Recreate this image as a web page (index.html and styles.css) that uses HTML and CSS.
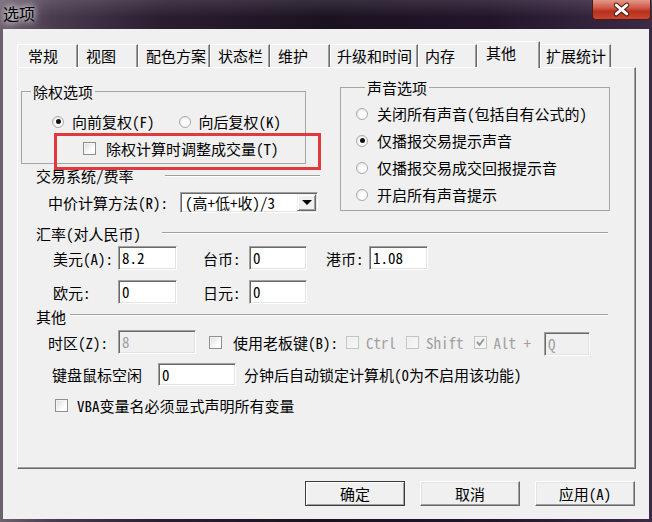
FILE: index.html
```html
<!DOCTYPE html>
<html lang="zh-CN">
<head>
    <meta charset="UTF-8">
    <title>选项</title>
    <link rel="stylesheet" href="styles.css">
</head>
<body>
    <div class="titlebar">
        <span class="title">选项</span>
        <div class="close-btn">
            <svg width="59" height="19" viewBox="0 0 59 19">
                <path d="M24 5 L35 14 M35 5 L24 14" stroke="#4a120c" stroke-width="5" stroke-linecap="round"/>
                <path d="M24 5 L35 14 M35 5 L24 14" stroke="#fff" stroke-width="3" stroke-linecap="round"/>
            </svg>
        </div>
    </div>

    <div class="client">
        <div class="tabs">
            <div class="tab">常规</div>
            <div class="tab">视图</div>
            <div class="tab">配色方案</div>
            <div class="tab">状态栏</div>
            <div class="tab">维护</div>
            <div class="tab">升级和时间</div>
            <div class="tab">内存</div>
            <div class="tab active">其他</div>
            <div class="tab">扩展统计</div>
        </div>

        <div class="panel">
            <div class="top-row">
                <div class="left-col">
                    <fieldset class="group group-xr">
                        <legend>除权选项</legend>
                        <div class="radio-row">
                            <span class="opt"><span class="radio checked"></span>向前复权(F)</span>
                            <span class="opt"><span class="radio"></span>向后复权(K)</span>
                        </div>
                        <div class="check-row marked">
                            <span class="check"></span>除权计算时调整成交量(T)
                        </div>
                    </fieldset>

                    <div class="section">
                        <span>交易系统/费率</span>
                        <i class="rule rule-short"></i>
                    </div>
                    <div class="row row-combo">
                        <span class="lbl lbl-combo">中价计算方法(R):</span>
                        <div class="combo">
                            <span>(高+低+收)/3</span>
                            <span class="drop"><i></i></span>
                        </div>
                    </div>
                </div>

                <fieldset class="group group-sound">
                    <legend>声音选项</legend>
                    <div class="opt"><span class="radio"></span>关闭所有声音(包括自有公式的)</div>
                    <div class="opt"><span class="radio checked"></span>仅播报交易提示声音</div>
                    <div class="opt"><span class="radio"></span>仅播报交易成交回报提示音</div>
                    <div class="opt"><span class="radio"></span>开启所有声音提示</div>
                </fieldset>
            </div>

            <div class="section section-rate">
                <span>汇率(对人民币)</span>
                <i class="rule rule-rate"></i>
            </div>
            <div class="row rate-row">
                <span class="lbl lbl-rate">美元(A):</span>
                <span class="field f-rate">8.2</span>
                <span class="lbl lbl-tw">台币:</span>
                <span class="field f-rate2">0</span>
                <span class="lbl lbl-hk">港币:</span>
                <span class="field f-rate">1.08</span>
            </div>
            <div class="row rate-row rate-row2">
                <span class="lbl lbl-rate">欧元:</span>
                <span class="field f-rate">0</span>
                <span class="lbl lbl-tw">日元:</span>
                <span class="field f-rate2">0</span>
            </div>

            <div class="section section-other">
                <span>其他</span>
                <i class="rule rule-other"></i>
            </div>
            <div class="row boss-row">
                <span class="lbl lbl-zone">时区(Z):</span>
                <span class="field f-zone disabled">8</span>
                <span class="check boss-check"></span>
                <span class="boss-text">使用老板键(B):</span>
                <span class="check disabled"></span>
                <span class="dim">Ctrl</span>
                <span class="check disabled"></span>
                <span class="dim">Shift</span>
                <span class="check disabled ticked">
                    <svg width="11" height="11" viewBox="0 0 11 11"><path d="M2 5 L4.5 8 L9 2" fill="none" stroke="#9a9a9a" stroke-width="2"/></svg>
                </span>
                <span class="dim">Alt +</span>
                <span class="field f-key disabled">Q</span>
            </div>
            <div class="row idle-row">
                <span class="lbl lbl-idle">键盘鼠标空闲</span>
                <span class="field f-idle">0</span>
                <span class="idle-text">分钟后自动锁定计算机(0为不启用该功能)</span>
            </div>
            <div class="row vba-row">
                <span class="check"></span>
                <span class="vba-text">VBA变量名必须显式声明所有变量</span>
            </div>
        </div>

        <div class="buttons">
            <div class="btn default">确定</div>
            <div class="btn">取消</div>
            <div class="btn">应用(A)</div>
        </div>
    </div>
</body>
</html>
```

FILE: styles.css
```css
* {
    box-sizing: border-box;
}

body {
    margin: 0;
    width: 652px;
    height: 522px;
    overflow: hidden;
    display: flex;
    flex-direction: column;
    font-family: "Noto Sans Mono CJK SC", "Noto Sans CJK SC", sans-serif;
    font-size: 15px;
    line-height: 17px;
    color: #000;
    background: linear-gradient(90deg, #6e6170 0%, #4a3b4f 8%, #2a1d30 25%, #1b1221 50%, #22152a 75%, #3d2a46 100%);
}

/* title bar */
.titlebar {
    height: 29px;
    display: flex;
    justify-content: space-between;
    align-items: flex-start;
    background: linear-gradient(180deg, rgba(255, 255, 255, 0.12), rgba(255, 255, 255, 0) 60%);
}

.title {
    padding: 5px 0 0 3px;
    font-size: 16px;
    text-shadow: 0 0 6px #fff, 0 0 10px rgba(255, 255, 255, 0.8);
}

.close-btn {
    width: 59px;
    height: 20px;
    margin-right: 1px;
    border: 1px solid #4a1a16;
    border-top: none;
    border-radius: 0 0 4px 4px;
    background: linear-gradient(180deg, #e3998c 0%, #d25a48 40%, #b8301f 60%, #c8462f 100%);
    display: flex;
    align-items: center;
    justify-content: center;
}

.close-btn svg {
    display: block;
}

/* client area */
.client {
    flex: 1;
    margin: 0 3px 3px;
    background: #f0f0f0;
    padding: 15px 13px 0 14px;
}

.tabs {
    display: flex;
    align-items: flex-end;
    height: 23px;
}

.tab {
    height: 23px;
    padding: 2px 0 0 7px;
    border-top: 1px solid #fff;
    border-left: 1px solid #fff;
    border-right: 1px solid #696969;
    box-shadow: inset -1px 0 #a0a0a0;
    white-space: nowrap;
}

.tab:nth-child(1) { width: 61px; padding-left: 10px; }
.tab:nth-child(2) { width: 60px; }
.tab:nth-child(3) { width: 72px; }
.tab:nth-child(4) { width: 60px; }
.tab:nth-child(5) { width: 60px; }
.tab:nth-child(6) { width: 88px; padding-left: 6px; }
.tab:nth-child(7) { width: 59px; padding-left: 6px; }
.tab:nth-child(8) { width: 63px; padding-left: 8px; }
.tab:nth-child(9) { width: 71px; padding-left: 5px; }

.tab.active {
    height: 27px;
    margin-bottom: -1px;
    position: relative;
    z-index: 1;
    background: #f0f0f0;
}

.panel {
    width: 619px;
    height: 402px;
    padding-left: 3px;
    border: 1px solid #fff;
    border-right-color: #696969;
    border-bottom-color: #696969;
    box-shadow: inset -1px -1px #a0a0a0;
}

/* group boxes */
.top-row {
    display: flex;
    align-items: flex-start;
}

.left-col {
    width: 299px;
}

.group {
    margin: 0;
    padding: 0;
    min-width: 0;
    border: 1px solid #a5a5a5;
}

.group legend {
    padding: 0 2px;
    margin-left: 9px;
}

.group-xr {
    width: 285px;
    margin-top: 15px;
    padding-bottom: 6px;
}

.group-sound {
    width: 270px;
    margin: 11px 0 0 20px;
    padding: 0 0 7px 15px;
}

.group-sound .opt {
    margin-top: 10px;
}

.group-sound .opt:first-of-type {
    margin-top: 9px;
}

.opt {
    display: flex;
    align-items: center;
    white-space: nowrap;
}

.radio {
    width: 12px;
    height: 12px;
    margin-right: 9px;
    border-radius: 50%;
    border: 1px solid #a9a9a9;
    background: radial-gradient(circle at 60% 60%, #fff 35%, #dcdcdc 100%);
    flex: none;
    display: flex;
    align-items: center;
    justify-content: center;
}

.radio.checked::after {
    content: "";
    width: 5px;
    height: 5px;
    border-radius: 50%;
    background: #111;
}

.radio-row {
    display: flex;
    padding-left: 30px;
    margin-top: 13px;
}

.radio-row .opt + .opt {
    margin-left: 24px;
}

.radio-row .radio {
    margin-right: 8px;
}

.check-row {
    position: relative;
    display: flex;
    align-items: center;
    padding-left: 61px;
    margin-top: 10px;
}

.check-row .check {
    margin-right: 10px;
}

/* red annotation frame */
.check-row.marked::after {
    content: "";
    position: absolute;
    left: 32px;
    top: -7px;
    width: 261px;
    height: 31px;
    border: 3px solid #e23a3c;
}

.check {
    width: 13px;
    height: 13px;
    flex: none;
    border: 1px solid #8e8f8f;
    background: linear-gradient(135deg, #dcdcdc, #fff 70%);
    box-shadow: inset 1px 1px #f4f4f4;
    display: flex;
    align-items: center;
    justify-content: center;
}

.check.disabled {
    border-color: #c4c4c4;
    background: linear-gradient(135deg, #ececec, #f8f8f8);
}

.check svg {
    display: block;
}

/* section headers with etched line */
.section {
    display: flex;
    align-items: center;
    padding-left: 15px;
    white-space: nowrap;
}

.rule {
    height: 2px;
    margin-left: auto;
    border-top: 1px solid #a0a0a0;
    border-bottom: 1px solid #fff;
}

.left-col .section {
    margin-top: 3px;
}

.rule-short {
    width: 155px;
}

.section-rate {
    margin-top: 12px;
}

.rule-rate {
    width: 446px;
    margin-right: 27px;
    position: relative;
    top: -1px;
}

.section-other {
    margin-top: 4px;
}

.rule-other {
    width: 538px;
    margin-right: 27px;
    position: relative;
    top: -2px;
}

/* rows */
.row {
    display: flex;
    align-items: center;
    white-space: nowrap;
}

.lbl {
    flex: none;
}

.row-combo {
    margin-top: 8px;
    padding-left: 27px;
}

.lbl-combo {
    width: 132px;
}

.combo {
    width: 138px;
    height: 21px;
    display: flex;
    align-items: center;
    justify-content: space-between;
    padding: 0 1px 0 4px;
    background: #fff;
    border: 1px solid;
    border-color: #a0a0a0 #fff #fff #a0a0a0;
    box-shadow: inset 1px 1px #696969, inset -1px -1px #e3e3e3;
}

.drop {
    width: 19px;
    height: 17px;
    background: #f0f0f0;
    border: 1px solid;
    border-color: #f0f0f0 #696969 #696969 #f0f0f0;
    box-shadow: inset 1px 1px #fff, inset -1px -1px #a0a0a0;
    display: flex;
    align-items: center;
    justify-content: center;
}

.drop i {
    width: 0;
    height: 0;
    border-left: 5px solid transparent;
    border-right: 5px solid transparent;
    border-top: 5px solid #000;
}

.field {
    height: 24px;
    padding: 2px 3px;
    flex: none;
    background: #fff;
    border: 1px solid;
    border-color: #a0a0a0 #fff #fff #a0a0a0;
    box-shadow: inset 1px 1px #696969, inset -1px -1px #e3e3e3;
}

.field.disabled {
    background: #f0f0f0;
    color: #a0a0a0;
}

.rate-row {
    margin-top: 4px;
    padding-left: 32px;
}

.rate-row2 {
    margin-top: 10px;
}

.lbl-rate { width: 65px; }
.f-rate { width: 59px; }
.lbl-tw { width: 46px; margin-left: 26px; }
.f-rate2 { width: 58px; }
.lbl-hk { width: 43px; margin-left: 19px; }

.boss-row {
    margin-top: 3px;
    padding-left: 27px;
}

.lbl-zone { width: 70px; }
.f-zone { width: 78px; }

.boss-check {
    margin-left: 13px;
}

.boss-text {
    margin: 0 8px 0 11px;
}

.dim {
    color: #a0a0a0;
    margin: 0 10px 0 7px;
}

.f-key {
    width: 46px;
    height: 24px;
    margin: 4px 0 0 3px;
}

.idle-row {
    margin-top: 7px;
    padding-left: 31px;
}

.lbl-idle { width: 106px; }
.f-idle { width: 78px; height: 23px; }

.idle-text {
    margin-left: 8px;
}

.vba-row {
    margin-top: 11px;
    padding-left: 34px;
}

.vba-text {
    margin-left: 9px;
}

/* bottom buttons */
.buttons {
    display: flex;
    justify-content: flex-end;
    gap: 15px;
    margin: 12px 1px 0 0;
}

.btn {
    width: 100px;
    height: 25px;
    padding-top: 3px;
    text-align: center;
    border: 1px solid;
    border-color: #fff #696969 #696969 #fff;
    box-shadow: inset -1px -1px #a0a0a0, inset 1px 1px #e3e3e3;
}

.btn.default {
    border-color: #3c3c3c;
    box-shadow: inset 1px 1px #fff, inset -1px -1px #a0a0a0;
}
```
